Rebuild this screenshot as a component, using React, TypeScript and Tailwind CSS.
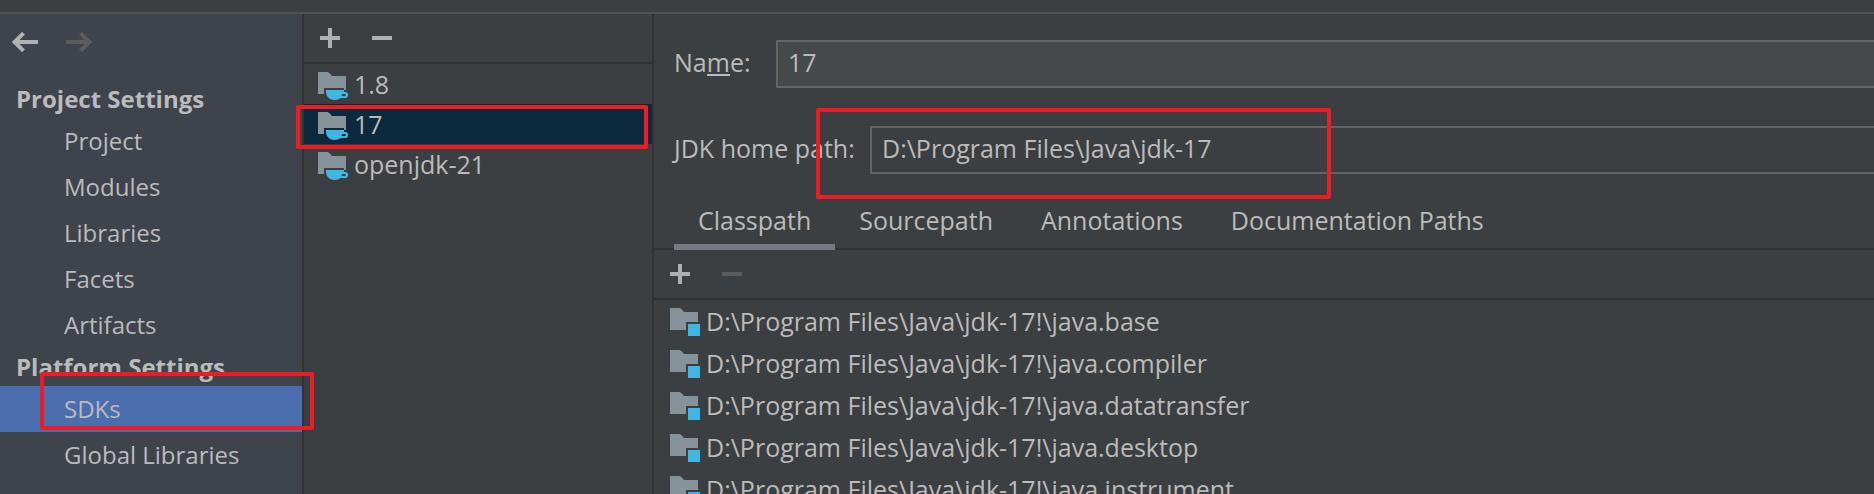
import type { ReactNode } from "react";

const projectItems = ["Project", "Modules", "Libraries", "Facets", "Artifacts"];
const platformItems = ["SDKs", "Global Libraries"];
const sdks = ["1.8", "17", "openjdk-21"];
const tabs = ["Classpath", "Sourcepath", "Annotations", "Documentation Paths"];
const modules = ["base", "compiler", "datatransfer", "desktop", "instrument"];

function ArrowIcon({ className }: { className: string }) {
  return (
    <svg viewBox="0 0 26 20" className={className} fill="none" stroke="currentColor" strokeWidth="4" aria-hidden="true">
      <path d="M26 10H3M11.5 1.2 2.7 10l8.800 8.800" />
    </svg>
  );
}

function PlusIcon() {
  return (
    <svg viewBox="0 0 20 20" className="h-5 w-5" fill="currentColor" aria-hidden="true">
      <path d="M8 0h4v8h8v4h-8v8H8v-8H0V8h8z" />
    </svg>
  );
}

function MinusIcon() {
  return (
    <svg viewBox="0 0 20 20" className="h-5 w-5" fill="currentColor" aria-hidden="true">
      <path d="M0 8h20v4H0z" />
    </svg>
  );
}

function SdkIcon() {
  return (
    <svg viewBox="0 0 30 28" className="mt-1 h-7 w-[30px] shrink-0" aria-hidden="true">
      <path fill="#87939a" d="M0 0h8.500c1.500 0 2.500.6 3.300 1.500L14 4h14v14h-2v-2H6v6H0z" />
      <path
        fill="#40b6e0"
        fillRule="evenodd"
        d="M8 18h18v2h1.500a2.500 2.500 0 0 1 2.500 2.500v1a2.500 2.500 0 0 1-2.500 2.500H22.800C21 27.300 19 28 16 28c-4.600 0-8-3.600-8-8.500zM24.500 22l-1.200 2H27c1 0 1-2 0-2z"
      />
    </svg>
  );
}

function ModuleIcon() {
  return (
    <svg viewBox="0 0 30 28" className="mt-0.5 h-7 w-[30px] shrink-0" aria-hidden="true">
      <path fill="#87939a" d="M0 0h8.500c1.500 0 2.500.6 3.300 1.500L14 4h14v10H16v8H0z" />
      <path fill="#40b6e0" d="M18 16h12v12H18z" />
    </svg>
  );
}

function Highlight({ className }: { className: string }) {
  return <div className={`pointer-events-none absolute z-10 rounded-xs border-4 border-[#ed1c24] ${className}`} />;
}

function Toolbar({ children }: { children: ReactNode }) {
  return <div className="flex h-[50px] shrink-0 items-center gap-8 border-b-2 border-[#323232] px-4">{children}</div>;
}

function NavItem({ label, selected }: { label: string; selected?: boolean }) {
  return (
    <li className="relative">
      <button
        type="button"
        className={selected ? "block h-[46px] w-full bg-[#4b6eaf] pl-16 text-left" : "block h-[46px] w-full pl-16 text-left"}
      >
        {label}
      </button>
      {selected && <Highlight className="-top-3.5 left-10 -right-3 h-[58px]" />}
    </li>
  );
}

export default function App() {
  return (
    <div className="flex h-screen flex-col overflow-hidden bg-[#3c3f41] font-['Open_Sans','Noto_Sans',sans-serif] text-[25px] leading-8 text-[#bbbbbb]">
      <div className="h-3.5 shrink-0 border-b-2 border-[#515151]" />
      <div className="flex min-h-0 flex-1">
        <nav className="w-[304px] shrink-0 border-r-2 border-[#323232] bg-[#3f434c] text-[24px] leading-8">
          <div className="flex h-[66px] items-center gap-7 px-3 pb-2.5">
            <button type="button" aria-label="Back">
              <ArrowIcon className="h-5 w-[26px] text-[#afb1b3]" />
            </button>
            <button type="button" aria-label="Forward" disabled>
              <ArrowIcon className="h-5 w-[26px] rotate-180 text-[#5b5b5b]" />
            </button>
          </div>
          <h2 className="flex h-[38px] items-center pl-4 font-bold">Project Settings</h2>
          <ul>
            {projectItems.map((item) => (
              <NavItem key={item} label={item} />
            ))}
          </ul>
          <h2 className="flex h-[38px] items-center pl-4 font-bold">Platform Settings</h2>
          <ul>
            {platformItems.map((item) => (
              <NavItem key={item} label={item} selected={item === "SDKs"} />
            ))}
          </ul>
        </nav>

        <section className="w-[350px] shrink-0 border-r-2 border-[#323232]">
          <Toolbar>
            <button type="button" aria-label="Add SDK" className="text-[#afb1b3]">
              <PlusIcon />
            </button>
            <button type="button" aria-label="Remove SDK" className="text-[#afb1b3]">
              <MinusIcon />
            </button>
          </Toolbar>
          <ul>
            {sdks.map((sdk) => (
              <li key={sdk} className="relative">
                <button
                  type="button"
                  className={
                    sdk === "17"
                      ? "flex h-10 w-full items-center gap-1.5 bg-[#0d293e] px-3.5"
                      : "flex h-10 w-full items-center gap-1.5 px-3.5"
                  }
                >
                  <SdkIcon />
                  <span>{sdk}</span>
                </button>
                {sdk === "17" && <Highlight className="-left-2 right-1 top-px h-[44px]" />}
              </li>
            ))}
          </ul>
        </section>

        <main className="flex min-w-0 flex-1 flex-col">
          <div className="flex items-center pl-5 pt-[26px]">
            <label htmlFor="sdk-name" className="w-[102px] shrink-0 pb-1">
              Na<span className="inline-block border-b-2 border-[#bbbbbb] leading-6">m</span>e:
            </label>
            <input
              id="sdk-name"
              defaultValue="17"
              className="h-12 min-w-0 flex-1 border-2 border-r-0 border-[#646464] bg-[#45494a] px-2.5 pb-1 outline-none"
            />
          </div>
          <div className="relative mt-[38px] flex items-center pl-5">
            <label htmlFor="sdk-path" className="w-[196px] shrink-0 pb-1">
              JDK home path:
            </label>
            <input
              id="sdk-path"
              defaultValue="D:\Program Files\Java\jdk-17"
              className="h-12 min-w-0 flex-1 border-2 border-r-0 border-[#646464] bg-transparent px-2.5 pb-1 outline-none"
            />
            <Highlight className="-top-[18px] left-[162px] h-[91px] w-[515px]" />
          </div>
          <div role="tablist" className="mt-5 flex h-14 shrink-0 border-b-2 border-[#323232] pl-5">
            {tabs.map((tab) => (
              <button
                key={tab}
                type="button"
                role="tab"
                aria-selected={tab === "Classpath"}
                className={
                  tab === "Classpath"
                    ? "-mb-0.5 border-b-6 border-[#747a80] px-6 pt-0.5"
                    : "-mb-0.5 border-b-6 border-transparent px-6 pt-0.5"
                }
              >
                {tab}
              </button>
            ))}
          </div>
          <Toolbar>
            <button type="button" aria-label="Add path" className="text-[#afb1b3]">
              <PlusIcon />
            </button>
            <button type="button" aria-label="Remove path" disabled className="text-[#5b5b5b]">
              <MinusIcon />
            </button>
          </Toolbar>
          <ul className="min-h-0 flex-1 overflow-hidden">
            {modules.map((name) => (
              <li key={name} className="flex h-[42px] items-center gap-1.5 px-4">
                <ModuleIcon />
                <span>{`D:\\Program Files\\Java\\jdk-17!\\java.${name}`}</span>
              </li>
            ))}
          </ul>
        </main>
      </div>
    </div>
  );
}
